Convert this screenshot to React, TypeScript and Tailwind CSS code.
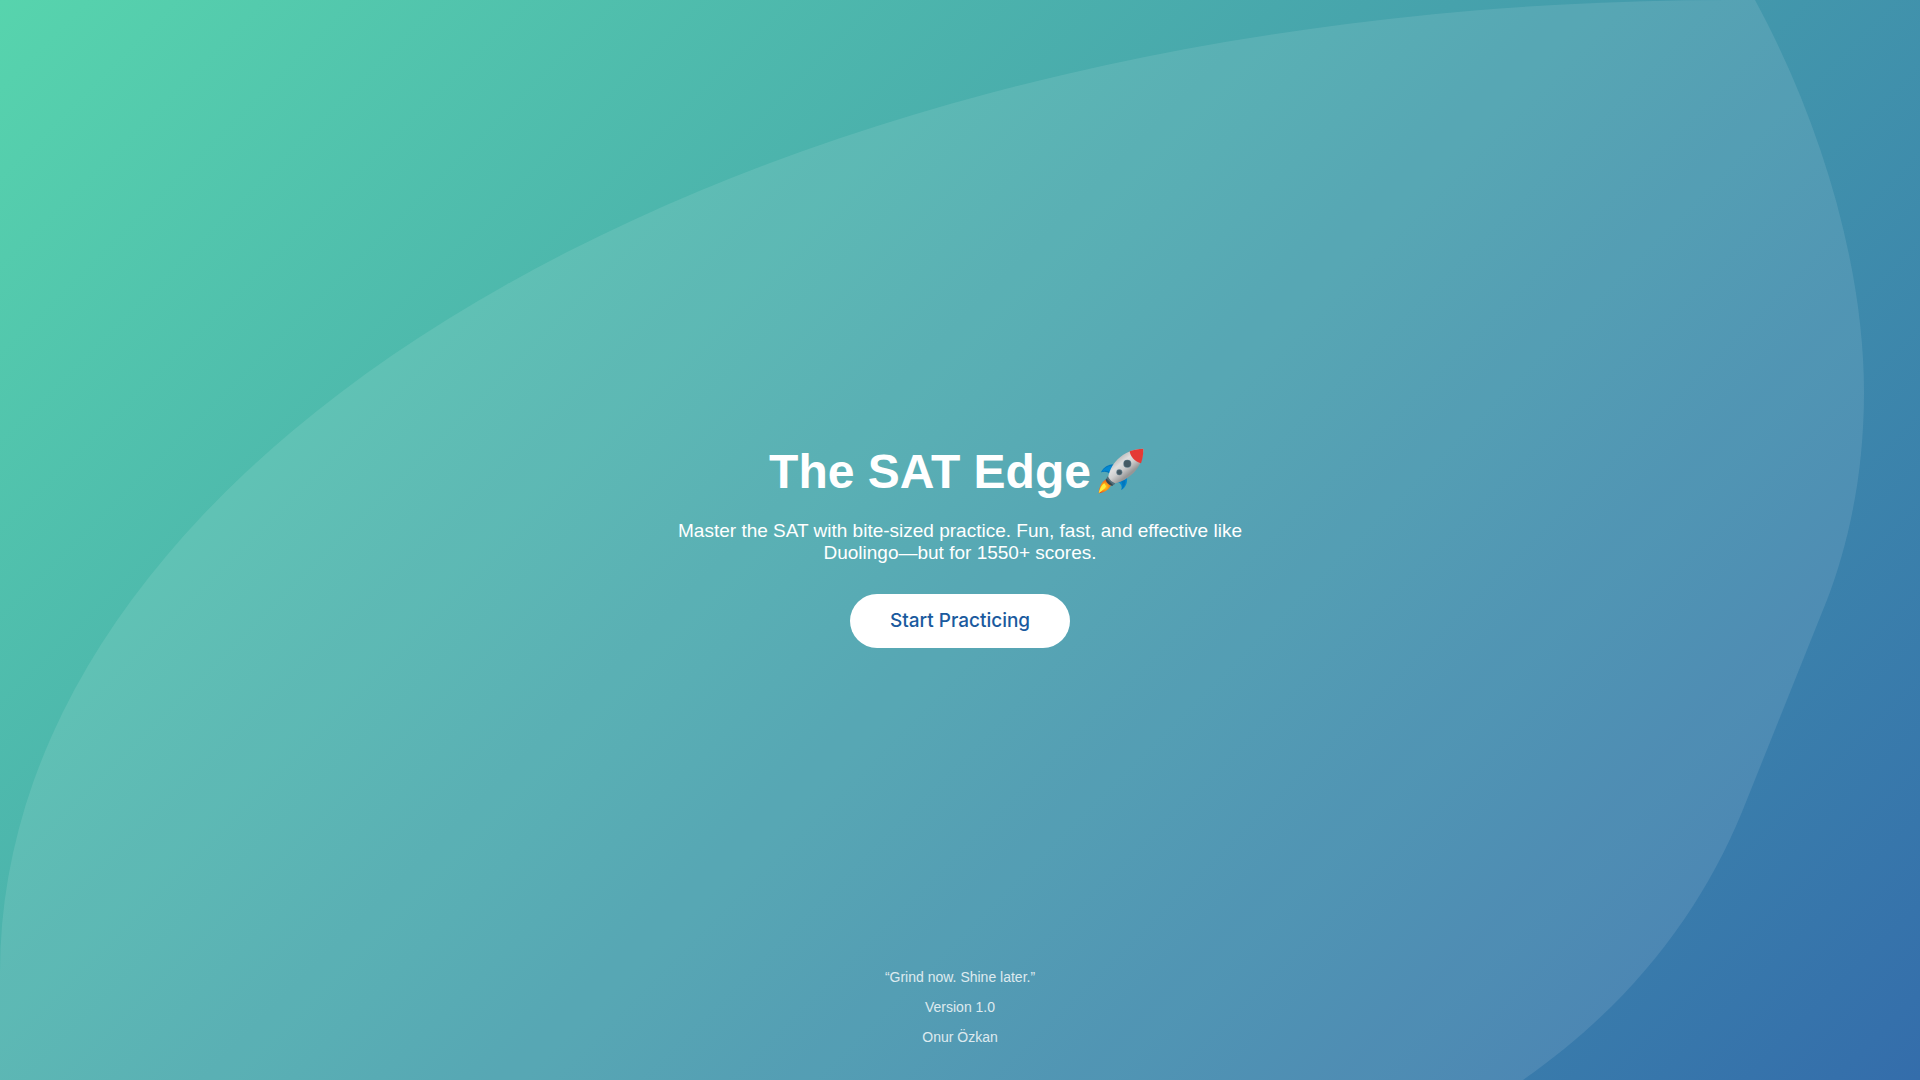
const footerLines = ["“Grind now. Shine later.”", "Version 1.0", "Onur Özkan"];

function Blob() {
  return (
    <svg
      className="absolute inset-0 h-full w-full"
      viewBox="0 0 1920 1080"
      preserveAspectRatio="none"
      aria-hidden="true"
    >
      <path
        d="M0 972A1728 972 0 0 1 1728 0L1755 0C1823 125 1864 270 1864 392C1864 470 1850 540 1827 600L1742 812C1700 914 1630 1005 1523 1080L0 1080Z"
        fill="#fff"
        fillOpacity="0.1"
      />
    </svg>
  );
}

function Rocket() {
  return (
    <svg
      className="mx-1.5 inline-block h-12 w-12 align-[-8px]"
      viewBox="0 0 144 144"
      role="img"
      aria-label="rocket"
    >
      <defs>
        <linearGradient id="body" x1="50" y1="30" x2="92" y2="82" gradientUnits="userSpaceOnUse">
          <stop offset="0" stopColor="#b0b0b0" />
          <stop offset="0.4" stopColor="#dedede" />
          <stop offset="0.65" stopColor="#cfcfcf" />
          <stop offset="1" stopColor="#969696" />
        </linearGradient>
        <radialGradient id="flame" cx="24" cy="116" r="24" gradientUnits="userSpaceOnUse">
          <stop offset="0" stopColor="#ffd21f" />
          <stop offset="0.4" stopColor="#fb9d14" />
          <stop offset="1" stopColor="#e8451c" />
        </radialGradient>
      </defs>
      <path d="M53 49C36 48 20 56 12 73C22 69 31 71 39 77Z" fill="#0277bd" />
      <path d="M45 53C33 53 21 60 12 73C20 67 31 67 39 72Z" fill="#0288d1" />
      <path d="M90 89C92 105 85 119 73 126C76 116 73 108 63 102Z" fill="#0288d1" />
      <path d="M85 94C87 107 82 118 73 126C78 116 77 107 72 100Z" fill="#0277bd" />
      <path
        d="M29 94C15 99 6 117 5 136C22 133 38 125 43 108Z"
        fill="url(#flame)"
      />
      <path d="M22 106C13 112 8 122 5 136C15 128 24 124 27 115Z" fill="#ffeb3b" />
      <path d="M32 85L55 107L46 113C37 112 29 104 26 95Z" fill="#546e7a" />
      <path d="M29 92L48 111L46 113C37 112 29 104 26 95Z" fill="#37474f" />
      <path
        d="M139 2C112 2 82 13 62 34C47 49 37 68 34 87C38 96 46 103 55 106C73 102 93 91 110 74C128 56 139 29 139 2Z"
        fill="url(#body)"
      />
      <path
        d="M139 2C125 2 111 5 98 10C100 26 114 42 132 46C137 32 139 17 139 2Z"
        fill="#e53935"
      />
      <circle cx="91" cy="47" r="12" fill="#607d8b" />
      <circle cx="91" cy="47" r="10" fill="#455a64" />
      <circle cx="67" cy="73" r="9" fill="#607d8b" />
      <circle cx="67" cy="73" r="7" fill="#455a64" />
    </svg>
  );
}

export default function App() {
  return (
    <div className="relative flex min-h-screen flex-col overflow-hidden bg-[linear-gradient(135deg,#57d4ad,#346dab)] text-center font-['Liberation_Sans',Arial,sans-serif] text-white">
      <Blob />
      <main className="relative flex flex-1 flex-col items-center justify-center px-5 pt-[126px]">
        <h1 className="mb-6 text-5xl font-bold">
          The SAT Edge
          <Rocket />
        </h1>
        <p className="mb-[30px] max-w-[600px] text-[19px] leading-[22px]">
          Master the SAT with bite-sized practice. Fun, fast, and effective like
          Duolingo—but for 1550+ scores.
        </p>
        <button
          type="button"
          className="rounded-full bg-white px-10 py-4 font-[Inter,sans-serif] text-[19px] leading-[22px] font-medium text-[#1a5a9e]"
        >
          Start Practicing
        </button>
      </main>
      <footer className="relative flex flex-col gap-3.5 pb-[35px] text-sm leading-4 opacity-80">
        {footerLines.map((line) => (
          <p key={line}>{line}</p>
        ))}
      </footer>
    </div>
  );
}
